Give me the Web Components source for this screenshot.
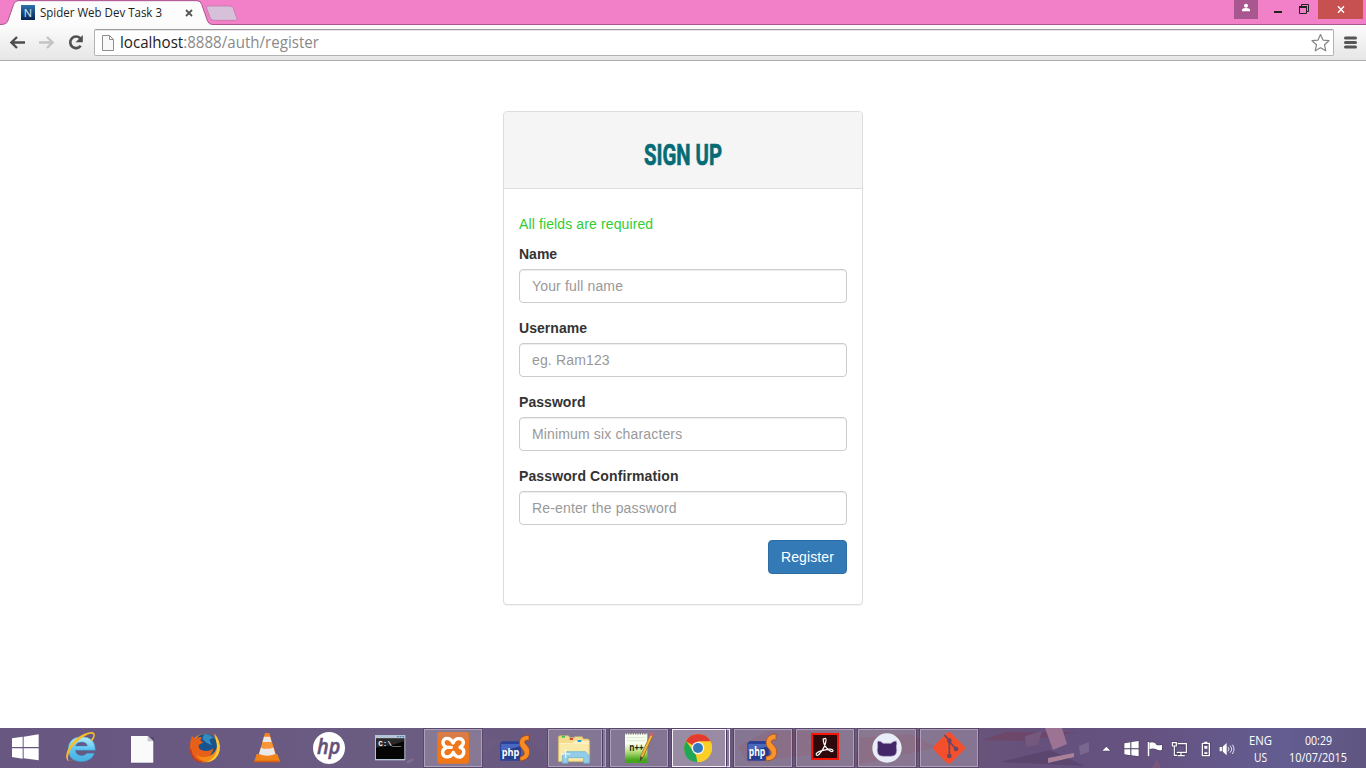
<!DOCTYPE html>
<html lang="en"><head><meta charset="utf-8"><title>Spider Web Dev Task 3</title>
<style>html,body{margin:0;height:100%;overflow:hidden;background:#fff}</style></head>
<body><desktop-screen></desktop-screen>
<script>
const define=(name,html)=>{
  const t=document.createElement('template');t.innerHTML=html;
  customElements.define(name,class extends HTMLElement{
    constructor(){super();this.attachShadow({mode:'open'}).append(t.content.cloneNode(true));}
  });
};

/* One line of text drawn to a given width: size, width, base (baseline), height, weight. */
customElements.define('fit-text',class extends HTMLElement{
  connectedCallback(){
    if(this.shadowRoot)return;
    const g=(n,d)=>this.getAttribute(n)||d,w=g('width'),h=g('height','16');
    this.attachShadow({mode:'open'}).innerHTML=`<style>:host{display:block;flex:none;width:${w}px;height:${h}px}svg{display:block;overflow:visible}</style>
    <svg width="${w}" height="${h}"><text x="0" y="${g('base','12')}" textLength="${w}" lengthAdjust="spacingAndGlyphs" font-size="${g('size','12')}" font-weight="${g('weight','400')}" stroke="currentColor" stroke-width="${g('bold','0')}" fill="currentColor">${g('runs',g('text'))}</text></svg>`;
  }
});

define('window-controls',`<style>:host{display:flex;width:132px;height:24px;flex:none}svg{display:block}</style>
<svg width="132" height="24" viewBox="102 0 396 72">
<path fill="#a8588e" d="M102 0h72v57h-72z"/><circle cx="138" cy="17" r="6" fill="#fff"/><path fill="#fff" d="M126 34v-4q0-6 12-6t12 6v4z"/>
<path fill="#222" d="M222 33h24v6h-24z"/><path fill="none" stroke="#222" stroke-width="3" d="M304.500 19v-5.500h21v21H320M298.500 20h21v20.500h-21z"/><path fill="#222" d="M297 18h24v6h-24z"/>
<path fill="#c75050" d="M354 0h135v57H354z"/><path stroke="#fff" stroke-width="4.500" d="M414 19l18 19M432 19l-18 19"/>
</svg>`);

define('browser-tab',`<style>:host{display:flex;position:relative;width:210px;height:25px;flex:none;align-items:center;color:#222;font-family:"Open Sans",sans-serif}
.bg{position:absolute;left:0;top:0}.row{position:relative;display:flex;align-items:center;padding-left:21px;height:25px}.n{margin-right:5px}.x{margin-left:23px}</style>
<svg class="bg" width="240" height="25" viewBox="0 0 720 75">
<path d="M0 74Q19 74 23 64L41 13Q45 3 54 3H591Q602 3 605 13L623 64Q627 73 637 73V75H0z" fill="#fcfcfc"/>
<path d="M0 73.500Q19 74 23 64L41 13Q45 2 54 2H591Q602 2 605 13L623 64Q627 73.500 637 73.500H720" fill="none" stroke="#a9578d" stroke-width="3"/>
<path d="M624 18H690Q697 18 700 25L711 56Q713 61 706 61H641Q634 61 631 54L620 25Q618 18 624 18z" fill="#d7c1da" stroke="#b9709f" stroke-width="2"/></svg>
<div class="row"><svg class="n" width="14" height="15" viewBox="0 0 14 15"><defs><linearGradient id="g" x2="0" y2="1"><stop stop-color="#2d72ae"/><stop offset="1" stop-color="#082450"/></linearGradient></defs><path d="M0 0h14v15H0z" fill="url(#g)"/><text x="2.800" y="11.500" font-size="11" font-family="Open Sans" fill="#dce8f3">N</text></svg>
<slot></slot><svg class="x" width="8" height="8" viewBox="0 0 8 8"><path d="M1 1l6 6M7 1L1 7" stroke="#555" stroke-width="1.800"/></svg></div>`);

define('title-bar',`<style>:host{display:flex;height:25px;background:#f180c9;justify-content:space-between;box-shadow:inset 0 -1px #a9578d}</style>
<browser-tab><fit-text text="Spider Web Dev Task 3" width="122" base="12.300" size="12"></fit-text></browser-tab><window-controls></window-controls>`);

define('address-bar',`<style>:host{display:flex;flex:1;height:27px;margin:4px 0 0 9px;box-sizing:border-box;border:1px solid #b3b3b3;border-top-color:#9d9d9d;border-radius:2px;background:#fff;box-shadow:inset 0 1px #e4e4e4;padding-left:7px;color:#8a8a8a;font-family:"Open Sans",sans-serif}svg{display:block;flex:none}.star{margin-left:auto;margin-right:3px}</style>
<svg width="18" height="25" viewBox="0 0 18 25"><path d="M.5 5.500h7l4 4v11H.5zM7.500 5.500v4h4" fill="#f9f9f9" stroke="#8e8e8e"/></svg>
<slot></slot><svg class="star" width="19" height="25" viewBox="0 0 19 25"><path d="M9.500 4.500l2.500 5.600 6 .6-4.500 4.100 1.300 6-5.300-3.100-5.300 3.100 1.300-6L1 10.700l6-.6z" fill="#fff" stroke="#858585" stroke-width="1.200" stroke-linejoin="round"/></svg>`);

define('tool-bar',`<style>:host{display:flex;height:36px;box-sizing:border-box;border-bottom:1px solid #acacac;background:linear-gradient(#fcfcfc,#e6e6e6)}svg{display:block;flex:none}</style>
<svg width="85" height="35" viewBox="0 0 85 35"><g fill="none" stroke-width="2.400"><path stroke="#4d4d4d" d="M25 17.500H11.500M17 12l-5.600 5.500L17 23"/><path stroke="#c4c4c4" d="M39 17.500h13.500M47 12l5.600 5.500L47 23"/><path stroke="#505050" stroke-width="2.600" d="M80.300 13.400a5.800 5.800 0 1 0 .4 7.400"/></g><path fill="#505050" d="M82.800 10v7.200h-7.200z"/></svg>
<address-bar><fit-text runs="<tspan fill='#222'>localhost</tspan>:8888/auth/register" width="199" height="25" base="17.800" size="15.500"></fit-text></address-bar>
<svg width="32" height="35" viewBox="0 0 32 35"><path stroke="#555" stroke-width="3" stroke-linecap="round" d="M11.500 13h10M11.500 17.500h10M11.500 22h10"/></svg>`);

define('form-field',`<style>:host{display:block;margin-bottom:15px}label{display:block;height:20px;line-height:20px;margin-bottom:5px;font-weight:700;letter-spacing:var(--label-track,0);color:#333}
div{box-sizing:border-box;height:34px;padding:6px 12px;border:1px solid #ccc;border-radius:4px;box-shadow:inset 0 1px 1px rgba(0,0,0,.075);line-height:20px;color:#999;letter-spacing:.15px}</style>
<label><slot name="label"></slot></label><div><slot></slot></div>`);

define('sign-up',`<style>:host{display:flex;flex-direction:column;box-sizing:border-box;width:360px;height:494px;border:1px solid #ddd;border-radius:4px;box-shadow:0 1px 1px rgba(0,0,0,.05);background:#fff;font:14px/20px "Liberation Sans",Arial,sans-serif}
header{display:flex;justify-content:center;height:76px;background:#f5f5f5;border-bottom:1px solid #ddd;border-radius:3px 3px 0 0;color:#056b75;font-family:"Liberation Sans Narrow","Roboto",sans-serif}
header fit-text{margin-top:25px}
main{padding:25px 15px}p{margin:0 0 10px;color:#32cd32;letter-spacing:.12px}button{display:block;margin:0 0 0 auto;width:79px;height:34px;padding:0;border:1px solid #2e6da4;border-radius:4px;background:#337ab7;color:#fff;font:inherit;letter-spacing:.13px}</style>
<header><fit-text text="SIGN UP" width="78" height="32" base="28" size="30" weight="700" bold=".7"></fit-text></header>
<main><p>All fields are required</p>
<form-field><span slot="label">Name</span>Your full name</form-field>
<form-field style="--label-track:.05px"><span slot="label">Username</span>eg. Ram123</form-field>
<form-field style="--label-track:.05px"><span slot="label">Password</span>Minimum six characters</form-field>
<form-field style="--label-track:.12px"><span slot="label">Password Confirmation</span>Re-enter the password</form-field>
<button>Register</button></main>`);

define('task-button',`<style>:host{display:flex;position:relative;flex:none;width:58px;height:40px;margin-right:4px}
:host([open])::before,:host([active])::before{content:"";position:absolute;inset:1px 0;box-sizing:border-box;border:1px solid #aaa0b8;background:#b7b0bd5c;box-shadow:0 0 0 1px #49385c88}
:host([active])::before{background:#c7bdca85;border-color:#f4f0f5}
:host([stack])::before{width:54px}:host([stack])::after{content:"";position:absolute;left:54px;top:1px;width:4px;height:38px;box-sizing:border-box;border:1px solid #aaa0b8;border-left-color:#4d3d60;background:#b7b0bd66}
:host([active])::after{border-color:#eee;border-left-color:#4d3d60}
::slotted(svg){position:relative;display:block;overflow:visible}</style><slot></slot>`);

define('system-tray',`<style>:host{display:flex;margin-left:auto;width:276px;height:40px;color:#fff;font-family:"Open Sans",sans-serif}svg{display:block;flex:none}.lang,.clock{display:flex;flex-direction:column;align-items:center;padding-top:5px;box-sizing:border-box}.lang{width:51px}.clock{width:64px}fit-text{margin-bottom:1px}</style>
<svg width="145" height="40" viewBox="0 12 435 120"><g fill="#fff" stroke="#413657" stroke-width="3" paint-order="stroke"><path d="M37 80l12-12 12 12z"/><path d="M103 58l18-3v18h-18zM124 54l22-3v22h-22zM103 76h18v18l-18-3zM124 76h22v21l-22-3z"/><path d="M173 54h5v43h-5zM179 56q8-3 17 2l3 4q8 4 17 0v15q-10 4-17-1-9-5-20-1z"/></g>
<g fill="none" stroke="#413657aa" stroke-width="8"><path d="M260 61h28v24h-33M272 85v9M263 94h19M247 56h12v10h-12zM253 66v28h8M337 58h21v37h-21z"/></g>
<g fill="none" stroke="#fff" stroke-width="3.500"><path d="M263 59h26v26h-29M273 86v8M263 95h21M247 56h12v10h-12zM253 66v28h8"/><path stroke-width="4" d="M337 58h21v37h-21zM343 55h9"/></g><path fill="#fff" d="M343 66h9v8h-9zM343 85h9v5h-9z"/>
<path fill="#fff" d="M389 69h8l13-12v37l-13-12h-8z"/><path fill="none" stroke="#413657" stroke-width="2" d="M397 67v17"/><path fill="none" stroke="#fff" stroke-width="2.500" d="M414 69q6 6 0 13M420 65q10 11 0 21M427 62q10 13 0 28"/></svg>
<div class="lang"><fit-text text="ENG" width="23"></fit-text><fit-text text="US" width="13"></fit-text></div>
<div class="clock"><fit-text text="00:29" width="27"></fit-text><fit-text text="10/07/2015" width="58"></fit-text></div>`);

define('task-bar',`<style>:host{display:flex;position:relative;height:40px;background:linear-gradient(90deg,#685781,#6b5c82 30%,#65547b 50%,#715979 64%,#65517b 75%,#655281 84%,#635d91 94%,#5f5580);overflow:hidden}.bg{position:absolute;inset:0}.start{display:block;flex:none}system-tray{position:relative}</style>
<svg class="bg" width="1366" height="40"><g opacity=".38"><path fill="#793850" d="M738 18l30-15h72l-35 12 25 9-82 11zM858 10l52-4 28 13-82 18zM983 12l23-8h73l-55 9z"/><path fill="#745c81" d="M460 2l40 10-32 26h-40zM520 0h45l-20 30z"/><path fill="#8e6581" d="M1025 8l17-5-4 14-12 2z"/><path fill="#4b355b" d="M1000 34l50-12 35 16z"/><path fill="#a08aaa" d="M1079 18l10-4v10l-9 3zM407 33l6-3v3l-6 3z"/></g><path fill="#9c7393" d="M1045 0h17l5 16-14 6z"/><path fill="#aa8199" d="M1048 30l26-5v4l-26 6z"/><path fill="#8c5b7188" d="M1152 40l5-9 4 9z"/></svg>
<svg class="start" width="52" height="40" viewBox="0 12 156 120" style="position:relative"><path fill="#fff" d="M36 43l32-5v31H36zM71 38l45-7v38H71zM36 73h32v31l-32-5zM71 73h45v36l-45-6z"/></svg>
<task-button><svg width="58" height="40" viewBox="156 12 174 120"><defs><linearGradient id="ie" x2="0" y2="1"><stop stop-color="#b7edff"/><stop offset=".5" stop-color="#5dc5f1"/><stop offset="1" stop-color="#48afe0"/></linearGradient></defs><path fill="url(#ie)" stroke="#3a91c4" stroke-width="1.500" fill-rule="evenodd" d="M286 79H226q1 15 18 16 12 0 16-7h23q-8 25-39 25-39-1-40-38 2-35 40-37 42 0 42 41zM226 66h36q-2-12-17-12t-19 12z"/><path fill="#f7bd27" d="M270 50q12-13 10-18-6-9-35 10-30 21-39 47-5 16 1 21 5 3 16-5-15 10-21 4-9-11 4-37 15-29 47-43 24-9 30-1 5 8-6 23z"/></svg></task-button>
<task-button><svg width="58" height="40" viewBox="342 12 174 120"><path fill="#40345166" d="M396 39h66v79h-66z"/><path fill="#fafafa" d="M393 36h50l17 16v64h-67z"/><path fill="#c4c4c8" d="M443 36l17 16h-17z"/></svg></task-button>
<task-button><svg width="58" height="40" viewBox="528 12 174 120"><circle cx="615" cy="72" r="43" fill="#f28b18"/><circle cx="617" cy="63" r="34" fill="#17548f"/><path fill="#338bc0" d="M612 30q20 0 28 13l-12 3 7 18-16-8-12-12z"/><path fill="#e86018" d="M571 53l5-18q5 8 12 9 8-7 17-4l-4 10 9 5-14 8q-2 15 15 17 19 3 29-8-4 33-40 26-6-2-12-8 8 20 31 23-35 3-46-25-5-17-2-35z"/><path fill="#ffc832" d="M642 28q22 23 17 52-8 32-39 34 28-13 31-39 1-18-9-47z"/><path fill="#c43b1e" d="M573 74q5 36 40 40-35 7-44-34z"/></svg></task-button>
<task-button><svg width="58" height="40" viewBox="24 12 174 120"><path fill="#ed8418" d="M80 90h62l9 24H72z"/><path fill="#d85e12" d="M73 110h77v5H73z"/><path fill="#f58220" d="M105 27h13l21 69q-27 16-54 0z"/><path fill="#e9e9e9" d="M102 38h18l5 17h-28zM93 70h37l6 20q-24 11-49 0z"/><path fill="#f79538" d="M98 54h27l4 17q-19 7-36 0z"/></svg></task-button>
<task-button><svg width="58" height="40" viewBox="210 12 174 120"><circle cx="297" cy="72" r="48" fill="#fff"/><text x="261" y="91" font-family="Open Sans" font-size="67" font-style="italic" font-weight="600" textLength="70" lengthAdjust="spacingAndGlyphs" stroke="#635079" stroke-width="1.500" fill="#635079">hp</text></svg></task-button>
<task-button><svg width="58" height="40" viewBox="396 12 174 120"><path fill="#b6c5d4" d="M435 33h91v76h-91z"/><path fill="#050505" d="M438 43h85v62h-85z"/><path fill="#4f80b0" d="M501 36h5v4h-5zM509 36h5v4h-5zM517 36h5v4h-5z"/><path fill="#55555577" d="M438 71q40-3 85-20v-8h-85z"/><text x="445" y="67" font-family="Liberation Mono" font-size="21" font-weight="700" textLength="68" lengthAdjust="spacingAndGlyphs" fill="#fff">C:\\__</text></svg></task-button>
<task-button open><svg width="58" height="40" viewBox="12 12 174 120"><rect x="52" y="24" width="95" height="95" rx="7" fill="#ef7619"/><path d="M54 29q0-4 5-4h81q5 0 5 5v17q-45-10-91 0z" fill="#d87c49"/><path fill="none" stroke="#fff" stroke-width="10" stroke-linecap="round" stroke-linejoin="round" d="M80 70q-12-5-11-17 4-13 17-9 9 3 13 13 5-11 14-13 14-2 17 9 1 12-10 17 14 4 11 18-5 14-19 10-10-4-12-13-4 11-14 13-15 3-18-10-1-13 12-18zM80 70h14"/></svg></task-button>
<task-button><svg width="58" height="40" viewBox="198 12 174 120"><path fill="#2c4298" d="M240 59l6-7h57v58h-63z"/><path fill="#4a67bf" d="M243 60h57v47h-57z"/><path fill="#283e8b" d="M243 107V82l57-15v40z"/><path fill="#f88b22" stroke="#9b4515" stroke-width="2" d="M327 34v15q-13-2-13 5 0 5 7 10 10 10 8 24-3 20-29 23V98q12-2 13-9 0-7-6-13-9-8-9-21 2-21 29-21z"/><text x="245" y="96" font-family="Open Sans" font-size="34" font-weight="700" textLength="53" lengthAdjust="spacingAndGlyphs" fill="#fff">php</text></svg></task-button>
<task-button open stack><svg width="58" height="40" viewBox="384 12 174 120"><path fill="#f5dc8c" stroke="#cbb56a" stroke-width="2" d="M415 47v-9l5-3h25l5 6h14v-3h23l3 7h15l4 6v62h-94z"/><path fill="#f9eaaa" d="M418 57h88v52h-88z"/><path fill="#fff2c2" d="M418 57h40l6-6h42v8h-88z"/><path fill="#43bf55" d="M425 35h10v6h-10z"/><path fill="#d84b36" d="M449 42h10v6h-10z"/><path fill="#2a98d9" d="M473 48h11v6h-11z"/><path fill="#91cce8" stroke="#64abcf" stroke-width="2" d="M427 118V95l12-12h57l12 12v23h-17v-17h-47v17z"/><path stroke="#efffff" stroke-width="3" d="M437 76v27M424 90h27"/></svg></task-button>
<task-button open><svg width="58" height="40" viewBox="570 12 174 120"><defs><linearGradient id="np" x2="0" y2="1"><stop offset=".35" stop-color="#f9fff0"/><stop offset=".6" stop-color="#bfe283"/><stop offset=".9" stop-color="#46a51c"/></linearGradient></defs><path fill="url(#np)" d="M615 28h67v89h-67z"/><path d="M617 29h64" stroke="#777" stroke-width="5" stroke-dasharray="4 3"/><path stroke="#cfdcc4" stroke-width="2" d="M620 41h56M620 50h56"/><text x="628" y="80" font-family="Open Sans" font-size="34" font-weight="700" textLength="43" lengthAdjust="spacingAndGlyphs" fill="#202c13">n++</text><path stroke="#8b5f22" stroke-width="10" d="M695 33l-30 66"/><path stroke="#efb33c" stroke-width="7" d="M695 33l-30 65"/><path stroke="#c76071" stroke-width="10" d="M697 26l-4 9"/><path fill="#4a4231" d="M661 97l8 4-10 12z"/></svg></task-button>
<task-button active stack><svg width="58" height="40" viewBox="96 12 174 120"><circle cx="174" cy="72" r="42" fill="#f9cd22"/><path fill="#e33b2e" d="M174 72l-37-20q12-22 37-22 26 0 38 22z"/><path fill="#20a755" d="M138 51l30 43 4 20q-39-2-40-43 0-11 6-20z"/><path fill="#fbd026" d="M174 52h38q12 28-9 50-13 13-31 12l20-31z"/><circle cx="174" cy="72" r="19" fill="#f3f4f2"/><circle cx="174" cy="72" r="15" fill="#3478bc"/></svg></task-button>
<task-button open><svg width="58" height="40" viewBox="282 12 174 120"><path fill="#2c4298" d="M322 58l7-7h60v59h-67z"/><path fill="#4969bd" d="M325 60h60v47h-60z"/><path fill="#233b8a" d="M325 107V82l60-15v40z"/><path fill="#fb932b" stroke="#a14b17" stroke-width="2" d="M408 30v18q-14-3-14 5 0 5 7 10 11 10 9 25-3 22-32 23V97q15-1 16-9 0-7-7-13-10-8-9-22 3-23 30-23z"/><text x="326" y="96" font-family="Open Sans" font-size="35" font-weight="700" textLength="50" lengthAdjust="spacingAndGlyphs" fill="#fff">php</text></svg></task-button>
<task-button open><svg width="58" height="40" viewBox="468 12 174 120"><path fill="#2d090b" stroke="#f61708" stroke-width="6" d="M516 30h78v75h-78z"/><path fill="none" stroke="#fff" stroke-width="3.500" d="M552 45q7-6 6 5-2 18-16 35-8 12-13 8-4-7 17-13 31-9 33-1 0 8-13-1-14-11-16-28-2-8 2-5z"/></svg></task-button>
<task-button open><svg width="58" height="40" viewBox="24 12 174 120"><circle cx="111" cy="72" r="44" fill="#e9edf7"/><path fill="#432668" stroke="#b7a9cc" stroke-width="2" d="M84 51q8-1 15 7h24q8-8 16-7 3 9 0 15 6 31-16 31H99q-22 0-16-31-2-8 1-15z"/></svg></task-button>
<task-button open><svg width="58" height="40" viewBox="210 12 174 120"><path fill="#f34f2c" d="M290 27q7-6 13 0l39 39q7 6 0 12l-39 38q-6 6-13 0l-38-38q-7-6 0-12z"/><path fill="none" stroke="#674766" stroke-width="5" d="M283 33l15 16v46M299 54l19 21"/><circle cx="298" cy="50" r="7" fill="#674766"/><circle cx="298" cy="96" r="7" fill="#674766"/><circle cx="318" cy="75" r="7" fill="#674766"/></svg></task-button>
<system-tray></system-tray>`);

define('desktop-screen',`<style>:host{display:flex;flex-direction:column;width:1366px;height:768px;background:#fff}section{flex:1;display:flex;justify-content:center;align-items:flex-start;padding-top:50px}title-bar,tool-bar,task-bar{flex:none}</style>
<title-bar></title-bar><tool-bar></tool-bar><section><sign-up></sign-up></section><task-bar></task-bar>`);
</script></body></html>
